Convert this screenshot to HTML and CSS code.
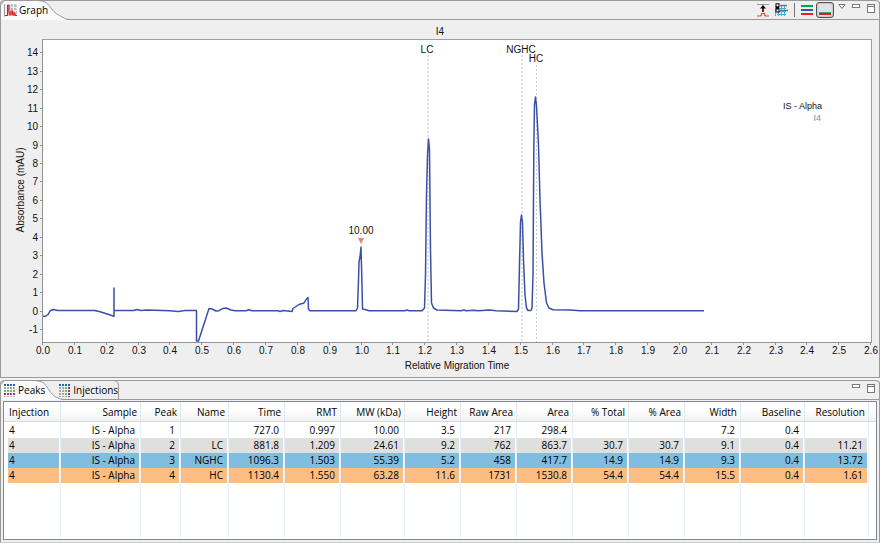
FILE: index.html
```
<!DOCTYPE html>
<html lang="en">
<head>
<meta charset="utf-8">
<title>Graph</title>
<link rel="stylesheet" href="styles.css">
</head>
<body>
<section class="panel graph-panel">
  <header class="tabbar">
    <svg class="tab-shape" width="70" height="20" viewBox="0 0 70 20" aria-hidden="true">
      <path class="tab-fill" d="M0 20V5L4 1H38C46 1 48 4 51 8C55 14 59 15 62 17L67 19.500V20Z"/>
      <path class="tab-line" d="M.5 20V5L4.500 .5H38C46 1 48 4 51 8C55 14 59 15 62 17Q65 19.500 70 19.500"/>
    </svg>
    <button class="tab" type="button">
      <svg width="13" height="13" viewBox="0 0 13 13" aria-hidden="true">
        <path d="M3 1.500H13M3 5H13M5 8.500H13" stroke="#b8b8b8" stroke-width="2.500" stroke-dasharray="2.500 1" fill="none"/>
        <path d="M.5 0V12.500" stroke="#999"/>
        <path d="M1 11.500H3.500V1.500H5V8L5.500 11H7V7H8.500V11H10V9H11V11.500H13" stroke="#e01b24" stroke-width="1.200" fill="none"/>
      </svg>
      <span>Graph</span>
    </button>
    <div class="tools">
      <button class="tool" type="button" aria-label="Scale to peak">
        <svg width="12" height="14" viewBox="0 0 12 14"><path d="M0 1.500H12" stroke="#999"/><path d="M6 9V3" stroke="#000" stroke-width="1.500"/><path d="M3 5.500L6 2L9 5.500Z" fill="#000"/><path d="M0 13H3.500L4.500 12V10.500H7.500V12L8.500 13H12" fill="none" stroke="#e8453c" stroke-width="1.200"/></svg>
      </button>
      <button class="tool" type="button" aria-label="Grid options">
        <svg width="13" height="14" viewBox="0 0 13 14"><path d="M2 5.500H11M2 8.500H11M2 11.500H11M.5 3V13M3.500 3V13M6.500 3V13M9.500 3V13" stroke="#2cbdec"/><path d="M5 2.500H12M5 7.500H13" stroke="#777" stroke-width="1.400"/><rect x="1" y=".8" width="3" height="3" fill="#fff" stroke="#000"/><rect x="1" y="6" width="3" height="3" fill="#fff" stroke="#000"/><path d="M2.500 4V6" stroke="#000" stroke-width="3"/></svg>
      </button>
      <span class="separator"></span>
      <button class="tool" type="button" aria-label="Stacked view">
        <svg width="12" height="12" viewBox="0 0 12 12"><path fill="#00a651" d="M0 1H12V3H0Z"/><path fill="#3a50a8" d="M0 5H12V7H0Z"/><path fill="#ed1c24" d="M0 9H12V11H0Z"/></svg>
      </button>
      <button class="tool pressed" type="button" aria-label="Overlay view">
        <svg width="12" height="12" viewBox="0 0 12 12"><path fill="#3aa878" d="M0 8H12V9H0Z"/><path fill="#3a50a8" d="M0 9H12V10H0Z"/><path fill="#ed1c24" d="M0 10H12V11H0Z"/></svg>
      </button>
      <button class="tool" type="button" aria-label="View menu">
        <svg width="8" height="14" viewBox="0 0 8 14"><path d="M.8 1.500H7.200L4 5.500Z" fill="#fff" stroke="#777"/></svg>
      </button>
      <div class="window-buttons">
        <button class="tool" type="button" aria-label="Minimize"><svg width="8" height="10" viewBox="0 0 8 10"><rect x=".5" y=".5" width="7" height="3" fill="#fff" stroke="#777"/></svg></button>
        <button class="tool" type="button" aria-label="Maximize"><svg width="8" height="10" viewBox="0 0 8 10"><rect x=".5" y=".5" width="7" height="8" fill="#fff" stroke="#777"/><path d="M0 2.500H8" stroke="#777"/></svg></button>
      </div>
    </div>
  </header>
  <svg class="chart" viewBox="1 20 878 357" role="img" aria-label="Electropherogram, injection I4">
    <rect x="43" y="40" width="828" height="302" fill="#fff"/>
    <path class="frame-light" d="M43 39.500H871M871.500 39V343"/>
    <path class="frame" d="M42.500 39V343M42 342.500H872"/>
    <path id="ticks" class="frame"/>
    <g id="y-labels" class="label end"></g>
    <g id="x-labels" class="label mid"></g>
    <text class="label mid" x="440" y="35">I4</text>
    <text class="label mid" x="457" y="369">Relative Migration Time</text>
    <text class="label mid" transform="translate(24 190) rotate(-90)">Absorbance (mAU)</text>
    <path class="guide guide-wide" d="M428 55V342M522 55V342"/>
    <path class="guide" d="M536.500 65V342"/>
    <g class="peak mid"><text x="427" y="53">LC</text><text x="521" y="53">NGHC</text><text x="536" y="62">HC</text></g>
    <text class="label mid" x="361" y="234">10.00</text>
    <path fill="#f27b7b" d="M358 238H364L361 244Z"/>
    <text class="label end small" x="822" y="109">IS - Alpha</text>
    <text class="label end small muted" x="821" y="121">I4</text>
    <path class="trace" d="M43 316.500L46 316L48 314.500L50 311L53 309.500L58 310.500H95L101 312L114 316.200V288V310.500L134 310.500L137 309.500L141 310.500L147 310L170 310.700L178 311.500L185 310.500H196.500V341H198.500L209 308.500L212 309L216 311L219 310.700L222 308.800L226 308L231 310L235 310.700H246L249 309.700L252 310.700L278 310.700L280 311.500L283 310.500L292 311.500L293 308.500L299 304.500L304 303L306 299.500L308 297.500L308.500 309L310 310.700H356L357.500 308L358.500 280L359 262L360 257L361 247L362 285L362.500 309L365 309.500L369 310.700H405L407 310L409 310.700H422L424.500 308L425.500 275L426.500 195L427.500 155L428.500 139L429.500 150L430.500 250L431.500 303L433.500 308L437 310L461 310.700L464 310L466 310.700L474 310.300L478 310.700L490 310L496 310.700L517 311.500L518.500 309L519.500 265L520.500 222L521.500 215L522.500 223L523.500 260L525 295L526.500 308L528 310.500H531L532 308L533 275L533.800 150L534.500 104L535.500 97L536.500 106L538.500 145L540 200L542 253L544 283L546.500 303L549 308L553 309.700L570 310L580 310.700H704"/>
  </svg>
</section>
<section class="panel data-panel">
  <header class="tabbar">
    <svg class="tab-shape" width="120" height="20" viewBox="0 0 120 20" aria-hidden="true">
      <path class="tab-fill" d="M0 20V5L4 1H33C43 1 44 3 47 7C51 13 53 16 58 18L62 19.500V20Z"/>
      <path class="tab-line" d="M.5 20V5L4.500 .5H33C43 1 44 3 47 7C51 13 53 16 58 18Q60 19.500 65 19.500M44 .5H114Q118.500 1 118.500 6V19"/>
    </svg>
    <button class="tab" type="button">
      <svg width="12" height="13" viewBox="0 0 12 13" aria-hidden="true"><g fill="none" stroke-width="2" stroke-dasharray="2 1"><path stroke="#1769a8" d="M0 1H12"/><path stroke="#aaa" d="M0 4H12"/><path stroke="#72bf44" d="M0 7H12"/><path stroke="#a83297" d="M0 10H12"/></g><path d="M0 12.500H12" stroke="#bbb" stroke-dasharray="2 1"/></svg>
      <span>Peaks</span>
    </button>
    <button class="tab tab-second" type="button">
      <svg width="12" height="13" viewBox="0 0 12 13" aria-hidden="true"><path stroke="#1769a8" stroke-width="2" stroke-dasharray="2 1" d="M0 1H12"/><g fill="none" stroke-width="2" stroke-dasharray="2 1"><path stroke="#aaa" d="M1 3V13M4 3V13"/><path stroke="#72bf44" d="M7 3V13"/><path stroke="#a83297" d="M10 3V13"/></g></svg>
      <span>Injections</span>
    </button>
    <div class="tools">
      <div class="window-buttons">
        <button class="tool" type="button" aria-label="Minimize"><svg width="8" height="10" viewBox="0 0 8 10"><rect x=".5" y=".5" width="7" height="3" fill="#fff" stroke="#777"/></svg></button>
        <button class="tool" type="button" aria-label="Maximize"><svg width="8" height="10" viewBox="0 0 8 10"><rect x=".5" y=".5" width="7" height="8" fill="#fff" stroke="#777"/><path d="M0 2.500H8" stroke="#777"/></svg></button>
      </div>
    </div>
  </header>
  <div class="table-box">
    <table>
      <colgroup>
        <col class="w57"><col class="w80"><col class="w40"><col class="w48"><col class="w56"><col class="w56"><col class="w64"><col class="w56"><col class="w56"><col class="w56"><col class="w56"><col class="w56"><col class="w56"><col class="w64"><col class="w64"><col class="w7">
      </colgroup>
      <thead><tr><th>Injection</th><th>Sample</th><th>Peak</th><th>Name</th><th>Time</th><th>RMT</th><th>MW (kDa)</th><th>Height</th><th>Raw Area</th><th>Area</th><th>% Total</th><th>% Area</th><th>Width</th><th>Baseline</th><th>Resolution</th><th></th></tr></thead>
      <tbody>
        <tr class="plain"><td>4</td><td>IS - Alpha</td><td>1</td><td></td><td>727.0</td><td>0.997</td><td>10.00</td><td>3.5</td><td>217</td><td>298.4</td><td></td><td></td><td>7.2</td><td>0.4</td><td></td><td></td></tr>
        <tr class="gray"><td>4</td><td>IS - Alpha</td><td>2</td><td>LC</td><td>881.8</td><td>1.209</td><td>24.61</td><td>9.2</td><td>762</td><td>863.7</td><td>30.7</td><td>30.7</td><td>9.1</td><td>0.4</td><td>11.21</td><td></td></tr>
        <tr class="blue"><td>4</td><td>IS - Alpha</td><td>3</td><td>NGHC</td><td>1096.3</td><td>1.503</td><td>55.39</td><td>5.2</td><td>458</td><td>417.7</td><td>14.9</td><td>14.9</td><td>9.3</td><td>0.4</td><td>13.72</td><td></td></tr>
        <tr class="orange"><td>4</td><td>IS - Alpha</td><td>4</td><td>HC</td><td>1130.4</td><td>1.550</td><td>63.28</td><td>11.6</td><td>1731</td><td>1530.8</td><td>54.4</td><td>54.4</td><td>15.5</td><td>0.4</td><td>1.61</td><td></td></tr>
        <tr class="rest"><td></td><td></td><td></td><td></td><td></td><td></td><td></td><td></td><td></td><td></td><td></td><td></td><td></td><td></td><td></td><td></td></tr>
      </tbody>
    </table>
  </div>
</section>
<script src="chart.js"></script>
</body>
</html>
```
FILE: styles.css
```
* { box-sizing: border-box; }
body {
  margin: 0;
  min-height: 100vh;
  display: flex;
  flex-direction: column;
  gap: 2px;
  background: #f4f4f4;
  color: #000;
  font: 10px/14px "Open Sans", "Noto Sans", sans-serif;
}
button { border: 0; padding: 0; margin: 0; background: none; font: inherit; color: inherit; }
.panel {
  background: #efefef;
  border: solid #9a9a9a;
  border-width: 0 1px 1px;
  border-radius: 4px 4px 0 0;
}
.data-panel { flex: 1; display: flex; flex-direction: column; border-bottom-color: #ccc; }
.tabbar {
  position: relative;
  height: 20px;
  display: flex;
  align-items: center;
  border-top: 1px solid #999;
  border-bottom: 1px solid #999;
  border-radius: 4px 4px 0 0;
}
.tab-shape { position: absolute; left: -1px; top: -1px; }
.tab-fill { fill: #fafafa; }
.tab-line { fill: none; stroke: #999; }
.tab { position: relative; display: flex; align-items: center; gap: 2px; margin-left: 3px; }
.tab-second { margin-left: 14px; }
.tools { margin-left: auto; display: flex; align-items: center; gap: 6px; padding-right: 4px; }
.tool { display: flex; align-items: center; justify-content: center; height: 16px; }
.separator { width: 1px; height: 14px; background: #777; }
.pressed { width: 18px; border: 1px solid #555; border-radius: 3px; background: #e2e2e2; box-shadow: inset 0 0 2px #888; margin: 0 -2px 0 -3px; }
.window-buttons { display: flex; gap: 7px; align-items: center; }
.window-buttons .tool { height: 18px; padding-bottom: 2px; }
.chart { display: block; width: 100%; height: auto; }
.frame { fill: none; stroke: #929292; }
.frame-light { fill: none; stroke: #a0a0a0; }
.label, .peak { font: 10px "Liberation Sans", Arial, sans-serif; fill: #111; }
.small { font-size: 9px; }
.muted { fill: #888; }
.mid { text-anchor: middle; }
.end { text-anchor: end; }
.guide { stroke: #c8c8c8; stroke-dasharray: 2 2; }
.guide-wide { stroke: #e0e0e0; stroke-width: 2; }
.trace { fill: none; stroke: #3a50a8; stroke-width: 1.5; stroke-linejoin: round; }
.table-box {
  flex: 1;
  display: flex;
  margin: 1px 2px 2px;
  border: 1px solid #828790;
  background: #fff;
}
table { width: 100%; table-layout: fixed; border-collapse: separate; border-spacing: 0; }
.w7 { width: 7px; }
.w40 { width: 40px; }
.w48 { width: 48px; }
.w56 { width: 56px; }
.w57 { width: 57px; }
.w64 { width: 64px; }
.w80 { width: 80px; }
th {
  height: 20px;
  padding: 1px 3px 0 0;
  font-weight: 400;
  text-align: right;
  white-space: nowrap;
  background: linear-gradient(#fff 40%, #f1f2f4);
  border-right: 1px solid #e3e8ee;
  border-bottom: 1px solid #d8dade;
}
td {
  height: 15px;
  padding: 0 5px 0 0;
  line-height: 15px;
  text-align: right;
  white-space: nowrap;
  border-right: 1px solid #e8f1fa;
  box-shadow: inset -1px 0 #fff;
}
th:first-child { text-align: left; padding-left: 5px; }
td:first-child { text-align: left; border-left: 4px solid #fff; padding-left: 1px; }
th:last-child, td:last-child { border-right: 0; padding: 0; }
.plain td { height: 16px; line-height: 16px; }
.gray td { background: #dfdfdd; }
.blue td { background: #80bddf; }
.orange td { background: #fbbd80; }
tr td:last-child { background: #fff; }
.rest td { height: auto; }
```
FILE: chart.js
```
const NS = "http://www.w3.org/2000/svg";
const X0 = 43, X_STEP = 31.85, Y0 = 310.5, Y_STEP = 18.44;
let ticks = "";

function addLabel(group, x, y, text) {
  const el = document.createElementNS(NS, "text");
  el.setAttribute("x", x);
  el.setAttribute("y", y);
  el.textContent = text;
  document.getElementById(group).append(el);
}

for (let i = 0; i <= 26; i++) {
  const x = Math.round(X0 + i * X_STEP);
  ticks += `M${x - 0.5} 343V345`;
  addLabel("x-labels", x, 354, (i / 10).toFixed(1));
}
for (let v = -1; v <= 14; v++) {
  const y = Math.round(Y0 - v * Y_STEP);
  ticks += `M40 ${y + 0.5}H42`;
  addLabel("y-labels", 38, y + 4, v);
}
document.getElementById("ticks").setAttribute("d", ticks);
```
